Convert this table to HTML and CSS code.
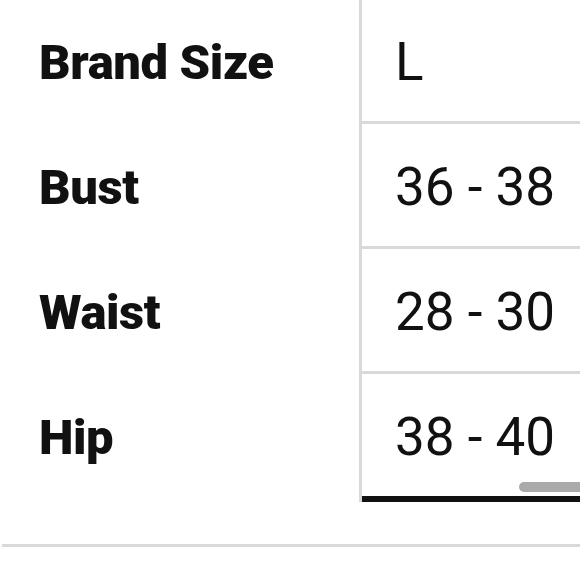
FILE: index.html
```html
<!DOCTYPE html>
<html>
<head>
<meta charset="utf-8">
<link rel="stylesheet" href="styles.css">
</head>
<body>
<div class="page">
  <div class="chart">
    <div class="labels">
      <div class="label">Brand Size</div>
      <div class="label">Bust</div>
      <div class="label">Waist</div>
      <div class="label">Hip</div>
    </div>
    <div class="values-wrap">
      <div class="values">
        <div class="value">L</div>
        <div class="value">36 - 38</div>
        <div class="value">28 - 30</div>
        <div class="value last">38 - 40</div>
      </div>
      <div class="thumb"></div>
    </div>
  </div>
  <div class="divider"></div>
</div>
</body>
</html>
```
FILE: styles.css
```css
html, body {
  margin: 0;
  padding: 0;
  background: #ffffff;
}
body {
  width: 580px;
  height: 580px;
  overflow: hidden;
  font-family: Roboto, "Liberation Sans", sans-serif;
  color: #111111;
}
.page {
  display: flex;
  flex-direction: column;
}
.chart {
  display: flex;
  margin-top: -1px;
}
.labels {
  width: 359px;
  display: flex;
  flex-direction: column;
}
.label {
  height: 125px;
  box-sizing: border-box;
  padding-left: 39px;
  padding-top: 2px;
  display: flex;
  align-items: center;
  font-weight: 900;
  font-size: 49px;
  letter-spacing: -0.4px;
}
.values-wrap {
  position: relative;
  flex: 1;
  overflow: hidden;
  border-left: 3px solid #d9d9d9;
}
.values {
  width: 400px;
  display: flex;
  flex-direction: column;
}
.value {
  height: 125px;
  box-sizing: border-box;
  padding-left: 33px;
  padding-top: 3px;
  border-bottom: 3px solid #d9d9d9;
  display: flex;
  align-items: center;
  font-size: 53px;
  font-weight: 400;
}
.value.last {
  height: 128px;
  border-bottom: 6px solid #111111;
}
.thumb {
  position: absolute;
  left: 157px;
  top: 483px;
  width: 120px;
  height: 10px;
  border-radius: 5px;
  background: #aaaaaa;
}
.divider {
  margin-top: 42px;
  margin-left: 2px;
  height: 3px;
  background: #d9d9d9;
}
```
